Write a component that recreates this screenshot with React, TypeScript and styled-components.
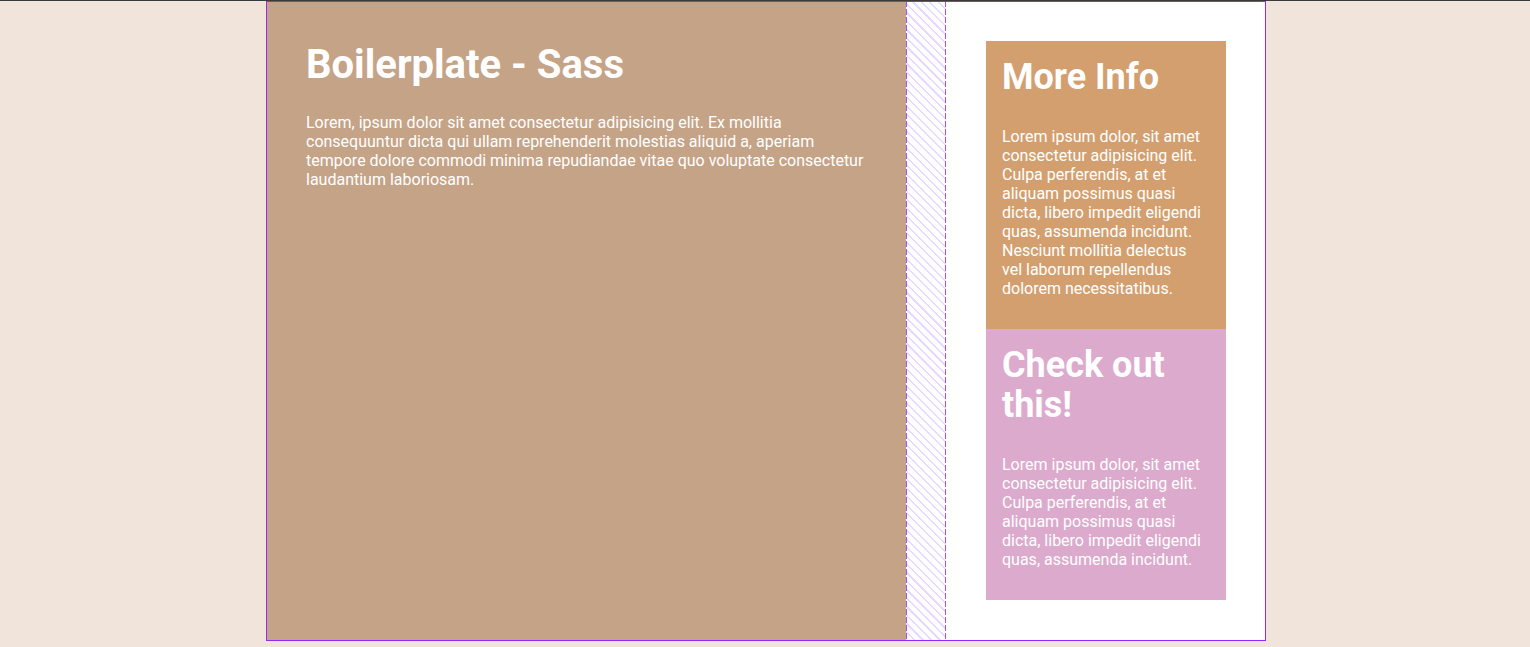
import React from "react";
import styled, { createGlobalStyle } from "styled-components";

const GlobalStyle = createGlobalStyle`
  * { box-sizing: border-box; }
  html, body { margin: 0; padding: 0; }
  body {
    background: #f1e4db;
    border-top: 1px solid #3a3a3a;
    font-family: Roboto, "Liberation Sans", Arial, sans-serif;
    color: #ffffff;
  }
`;

const Layout = styled.div`
  position: relative;
  width: 1000px;
  height: 640px;
  margin: 0 0 0 calc(50% - 499px);
  display: grid;
  grid-template-columns: 2fr 40px 1fr;
  background: #ffffff;

  &::after {
    content: "";
    position: absolute;
    inset: 0;
    border: 1px solid #9329ff;
    pointer-events: none;
  }
`;

const Main = styled.main`
  background: #c5a387;
  padding: 40px;
`;

const GapHatch = styled.div`
  background:
    repeating-linear-gradient(to bottom, #a64dff 0 6px, transparent 6px 8px) left top / 1px 100% no-repeat,
    repeating-linear-gradient(to bottom, #a64dff 0 6px, transparent 6px 8px) right top / 1px 100% no-repeat,
    repeating-linear-gradient(45deg, rgba(170, 120, 255, 0.28) 0 1.5px, transparent 1.5px 6px),
    #ffffff;
`;

const Aside = styled.aside`
  padding: 40px;
  display: flex;
  flex-direction: column;
`;

const Title = styled.h1`
  margin: 0 0 25px;
  font-size: 40px;
  font-weight: 700;
  line-height: normal;
`;

const Text = styled.p`
  margin: 0;
  font-size: 16px;
  line-height: 19px;
  font-weight: 400;
`;

const Card = styled.section<{ $bg: string }>`
  background: ${(p) => p.$bg};
  padding: 16px;
  display: flex;
  flex-direction: column;
  gap: 30px;
`;

const CardTitle = styled.h2`
  margin: 0;
  font-size: 36px;
  font-weight: 700;
  line-height: 40px;
`;

const CardText = styled(Text)`
  margin-bottom: 15px;
`;

export default function App() {
  return (
    <>
      <GlobalStyle />
      <Layout>
        <Main>
          <Title>Boilerplate - Sass</Title>
          <Text>
            Lorem, ipsum dolor sit amet consectetur adipisicing elit. Ex mollitia consequuntur dicta qui ullam
            reprehenderit molestias aliquid a, aperiam tempore dolore commodi minima repudiandae vitae quo voluptate
            consectetur laudantium laboriosam.
          </Text>
        </Main>
        <GapHatch />
        <Aside>
          <Card $bg="#d39f6f">
            <CardTitle>More Info</CardTitle>
            <CardText>
              Lorem ipsum dolor, sit amet consectetur adipisicing elit. Culpa perferendis, at et aliquam possimus
              quasi dicta, libero impedit eligendi quas, assumenda incidunt. Nesciunt mollitia delectus vel laborum
              repellendus dolorem necessitatibus.
            </CardText>
          </Card>
          <Card $bg="#dcaacc">
            <CardTitle>Check out this!</CardTitle>
            <CardText>
              Lorem ipsum dolor, sit amet consectetur adipisicing elit. Culpa perferendis, at et aliquam possimus
              quasi dicta, libero impedit eligendi quas, assumenda incidunt.
            </CardText>
          </Card>
        </Aside>
      </Layout>
    </>
  );
}
